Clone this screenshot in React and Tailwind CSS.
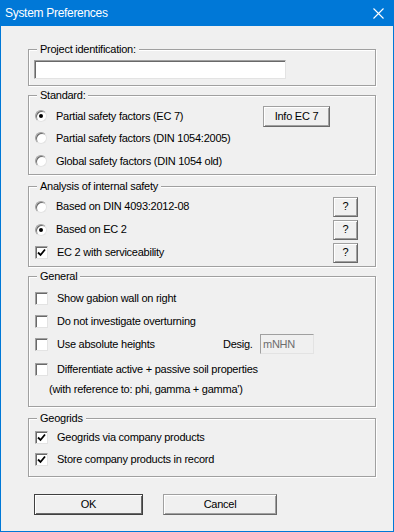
import React from "react";

const font = { fontFamily: "'Liberation Sans', Arial, sans-serif" };

const Group = ({ label, className, children }) => (
  <div
    className={
      "relative border border-[#a0a0a0] shadow-[inset_1px_1px_0_#fff,1px_1px_0_#fff] " +
      className
    }
  >
    <span className="absolute left-[8px] top-[-8px] bg-[#f0f0f0] px-[3px] leading-[14px]">
      {label}
    </span>
    {children}
  </div>
);

const Radio = ({ checked }) => (
  <span className="w-[12px] h-[12px] rounded-full border border-[#a0a0a0] border-b-[#e3e3e3] border-r-[#e3e3e3] bg-white shadow-[inset_1px_1px_0_#696969] flex items-center justify-center shrink-0">
    {checked && <span className="w-[4px] h-[4px] rounded-full bg-black" />}
  </span>
);

const Check = ({ checked }) => (
  <span className="w-[13px] h-[13px] border border-[#a0a0a0] border-b-[#e3e3e3] border-r-[#e3e3e3] bg-white shadow-[inset_1px_1px_0_#696969] flex items-center justify-center shrink-0">
    {checked && (
      <svg width="9" height="9" viewBox="0 0 9 9">
        <path d="M1 4.5 L3.5 7 L8 1.5" fill="none" stroke="#000" strokeWidth="1.8" />
      </svg>
    )}
  </span>
);

const Btn = ({ children, className }) => (
  <button className={"flex items-center justify-center bg-[#f0f0f0] border border-[#a0a0a0] border-b-[#696969] border-r-[#696969] shadow-[inset_1px_1px_0_#fff,inset_-1px_-1px_0_#a0a0a0] leading-none " + className}>
    {children}
  </button>
);

const Row = ({ control, text, className, children }) => (
  <div className={"flex items-center " + className}>
    {control}
    <span className="ml-[9px]">{text}</span>
    {children}
  </div>
);

export default function App() {
  return (
    <div
      style={font}
      className="w-[394px] h-[532px] flex flex-col bg-[#0078d7] px-px pb-px text-[11px] tracking-[-0.25px] text-black"
    >
      <div className="h-[26px] shrink-0 flex items-center justify-between pl-[4px] pr-[9px] text-white text-[12px] tracking-[-0.3px]">
        <span>System Preferences</span>
        <svg width="11" height="11" viewBox="0 0 11 11">
          <path d="M0.5 0.5 L10.5 10.5 M10.5 0.5 L0.5 10.5" stroke="#fff" strokeWidth="1.1" />
        </svg>
      </div>
      <div className="flex-1 bg-[#f0f0f0] pl-[27px] pt-[23px]">
        <div className="w-[348px] flex flex-col">
          <Group label="Project identification:" className="h-[37px]">
            <div className="ml-[5px] mt-[10px] w-[252px] h-[19px] bg-white border border-[#a0a0a0] border-b-[#e3e3e3] border-r-[#e3e3e3] shadow-[inset_1px_1px_0_#696969]" />
          </Group>

          <Group label="Standard:" className="h-[80px] mt-[9px] pt-[9px] pl-[6px]">
            <Row control={<Radio checked />} text="Partial safety factors (EC 7)" className="h-[22px]">
              <Btn className="ml-auto mr-[45px] w-[67px] h-[21px]">Info EC 7</Btn>
            </Row>
            <Row control={<Radio />} text="Partial safety factors (DIN 1054:2005)" className="h-[22px]" />
            <Row control={<Radio />} text="Global safety factors (DIN 1054 old)" className="h-[22px] mt-[1px]" />
          </Group>

          <Group label="Analysis of internal safety" className="h-[81px] mt-[11px] pt-[8px] pl-[6px]">
            <Row control={<Radio />} text="Based on DIN 4093:2012-08" className="h-[23px]">
              <Btn className="ml-auto mr-[17px] w-[25px] h-[20px]">?</Btn>
            </Row>
            <Row control={<Radio checked />} text="Based on EC 2" className="h-[23px]">
              <Btn className="ml-auto mr-[17px] w-[25px] h-[20px]">?</Btn>
            </Row>
            <Row control={<Check checked />} text="EC 2 with serviceability" className="h-[23px]">
              <Btn className="ml-auto mr-[17px] w-[25px] h-[20px]">?</Btn>
            </Row>
          </Group>

          <Group label="General" className="h-[131px] mt-[9px] pt-[10px] pl-[6px]">
            <Row control={<Check />} text="Show gabion wall on right" className="h-[23px]" />
            <Row control={<Check />} text="Do not investigate overturning" className="h-[23px]" />
            <div className="flex items-center h-[22px]">
              <Check />
              <span className="ml-[9px] w-[166px]">Use absolute heights</span>
              <span className="w-[37px]">Desig.</span>
              <div className="w-[54px] h-[20px] border border-[#a0a0a0] border-b-[#e3e3e3] border-r-[#e3e3e3] bg-[#f0f0f0] text-[#6d6d6d] pl-[2px] flex items-center">
                mNHN
              </div>
            </div>
            <Row control={<Check />} text="Differentiate active + passive soil properties" className="h-[22px] mt-[3px]" />
            <div className="h-[18px] flex items-center pl-[14px]">
              (with reference to: phi, gamma + gamma')
            </div>
          </Group>

          <Group label="Geogrids" className="h-[59px] mt-[11px] pt-[7px] pl-[6px]">
            <Row control={<Check checked />} text="Geogrids via company products" className="h-[22px]" />
            <Row control={<Check checked />} text="Store company products in record" className="h-[22px]" />
          </Group>

          <div className="flex mt-[17px] pl-[6px]">
            <button className="w-[109px] h-[21px] flex items-center justify-center bg-[#f0f0f0] border border-[#404040] shadow-[inset_1px_1px_0_#fff,inset_-1px_-1px_0_#696969]">
              OK
            </button>
            <Btn className="ml-[20px] w-[114px] h-[21px]">Cancel</Btn>
          </div>
        </div>
      </div>
    </div>
  );
}
